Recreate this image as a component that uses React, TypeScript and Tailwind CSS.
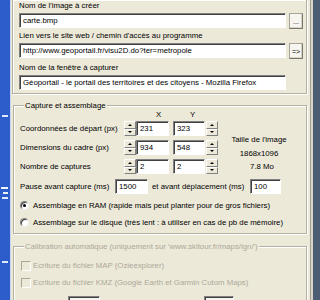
const face = "font-['Liberation_Sans',Arial,sans-serif]";

function Field({ value, className = "", disabled = false }: { value: string; className?: string; disabled?: boolean }) {
  return (
    <div
      className={`h-[15px] border border-[#808080] border-b-white border-r-white shadow-[inset_1px_1px_0_#404040] pl-[3px] leading-[13px] whitespace-nowrap overflow-hidden ${
        disabled ? "bg-[#f4f3ee] text-[#aca899]" : "bg-white text-black"
      } ${className}`}
    >
      {value}
    </div>
  );
}

function Btn({ label }: { label: string }) {
  return (
    <div className="ml-[3px] w-[14px] h-[16px] flex items-center justify-center border border-[#a6a49a] border-b-[#7a786e] border-r-[#7a786e] bg-[#f6f5f0] shadow-[inset_-1px_-1px_0_#d6d3c6] text-[7px] leading-none">
      {label}
    </div>
  );
}

function Spin() {
  return (
    <div className="w-[12px] h-[15px] flex flex-col">
      <div className="flex-1 flex items-center justify-center border border-white border-b-[#808080] border-r-[#808080] bg-[#ECE9D8]">
        <div className="w-0 h-0 border-l-[2px] border-r-[2px] border-b-[2px] border-l-transparent border-r-transparent border-b-black" />
      </div>
      <div className="flex-1 flex items-center justify-center border border-white border-b-[#808080] border-r-[#808080] bg-[#ECE9D8]">
        <div className="w-0 h-0 border-l-[2px] border-r-[2px] border-t-[2px] border-l-transparent border-r-transparent border-t-black" />
      </div>
    </div>
  );
}

function SpinRow({ label, x, y }: { label: string; x: string; y: string }) {
  return (
    <div className="flex items-center h-[15px] mb-[4px]">
      <div className="w-[104px] whitespace-nowrap">{label}</div>
      <Spin />
      <Field value={x} className="w-[33px]" />
      <Field value={y} className="w-[32px] ml-[4px]" />
      <div className="ml-[1px]">
        <Spin />
      </div>
    </div>
  );
}

function Radio({ checked, label }: { checked?: boolean; label: string }) {
  return (
    <div className="flex items-center h-[11px] mt-[6px]">
      <div className="w-[9px] h-[9px] rounded-full bg-white border border-[#808080] border-b-[#f0f0f0] border-r-[#f0f0f0] shadow-[inset_1px_1px_0_#404040] flex items-center justify-center">
        {checked && <div className="w-[3px] h-[3px] rounded-full bg-black" />}
      </div>
      <div className="ml-[4px] whitespace-nowrap">{label}</div>
    </div>
  );
}

function Check({ label, className = "" }: { label: string; className?: string }) {
  return (
    <div className={`flex items-center h-[11px] ${className}`}>
      <div className="ml-[1px] w-[10px] h-[10px] border border-[#aca899] border-b-white border-r-white bg-[#ECE9D8]" />
      <div className="ml-[2px] whitespace-nowrap text-[#aca899]">{label}</div>
    </div>
  );
}

const groupBox = "border border-[#b3b0a3] shadow-[inset_1px_1px_0_#fff,1px_1px_0_#fff]";

export default function App() {
  return (
    <div className={`w-[320px] h-[300px] overflow-hidden flex ${face} text-[7.8px] text-black`}>
      {/* desktop behind the window */}
      <div className="w-[10px] h-full bg-[#2c5dcb] flex flex-col">
        <div className="h-[115px]" />
        <div className="ml-[2px] w-[6px] h-[2px] bg-[#dfe8ff]" />
        <div className="h-[70px]" />
        <div className="ml-[1px] w-[7px] h-[2px] bg-[#eef3ff]" />
        <div className="mt-[3px] ml-[3px] w-[5px] h-[2px] bg-[#eef3ff]" />
        <div className="mt-[3px] ml-[2px] w-[6px] h-[2px] bg-[#dfe8ff]" />
        <div className="h-[62px]" />
        <div className="ml-[2px] w-[6px] h-[2px] bg-[#dfe8ff]" />
      </div>
      <div className="w-[1px] h-full bg-[#c9d6f2]" />

      {/* dialog */}
      <div className="w-[299px] h-full bg-[#ECE9D8] flex flex-col">
        <div className={`ml-[1px] w-[295px] border-t-0 ${groupBox} pl-[6px] pb-[3px]`}>
          <div className="h-[11px] leading-[11px]">Nom de l'image à créer</div>
          <div className="mt-[2px] flex items-start">
            <Field value="carte.bmp" className="w-[267px]" />
            <Btn label="..." />
          </div>
          <div className="mt-[1px] h-[11px] leading-[11px] whitespace-nowrap">
            Lien vers le site web / chemin d'accès au programme
          </div>
          <div className="mt-[2px] flex items-start">
            <Field value="http://www.geoportail.fr/visu2D.do?ter=metropole" className="w-[267px]" />
            <Btn label="=>" />
          </div>
          <div className="mt-[3px] h-[11px] leading-[11px]">Nom de la fenêtre à capturer</div>
          <div className="mt-[2px]">
            <Field
              value="Géoportail - le portail des territoires et des citoyens - Mozilla Firefox"
              className="w-[267px]"
            />
          </div>
        </div>

        <fieldset className={`mt-[6px] ml-[2px] w-[294px] ${groupBox} pl-[6px] pb-[5px]`}>
          <legend className="ml-[4px] px-[1px] h-[11px] leading-[11px] bg-[#ECE9D8]">Capture et assemblage</legend>
          <div className="h-[10px] leading-[7px] pl-[136px] flex">
            <span className="w-[34px]">X</span>
            <span>Y</span>
          </div>
          <div className="flex">
            <div className="flex flex-col">
              <SpinRow label="Coordonnées de départ (px)" x="231" y="323" />
              <SpinRow label="Dimensions du cadre (px)" x="934" y="548" />
              <SpinRow label="Nombre de captures" x="2" y="2" />
            </div>
            <div className="flex-1 pt-[12px] leading-[13.5px] flex flex-col items-center pr-[6px]">
              <div>Taille de l'image</div>
              <div>1868x1096</div>
              <div className="pl-[6px]">7.8 Mo</div>
            </div>
          </div>
          <div className="mt-[1px] flex items-center h-[15px]">
            <div className="w-[95px] whitespace-nowrap">Pause avant capture (ms)</div>
            <Field value="1500" className="w-[33px]" />
            <div className="ml-[4px] w-[98px] whitespace-nowrap">et avant déplacement (ms)</div>
            <Field value="100" className="w-[31px]" />
          </div>
          <Radio checked label="Assemblage en RAM (rapide mais peut planter pour de gros fichiers)" />
          <Radio label="Assemblage sur le disque (très lent : à utiliser en cas de pb de mémoire)" />
        </fieldset>

        <fieldset className={`mt-[7px] ml-[2px] w-[294px] ${groupBox} pl-[6px] pb-[6px]`}>
          <legend className="ml-[4px] px-[1px] h-[11px] leading-[11px] bg-[#ECE9D8] text-[#aca899] whitespace-nowrap">
            Calibration automatique (uniquement sur 'www.skitour.fr/maps/ign/')
          </legend>
          <Check className="mt-[8px]" label="Ecriture du fichier MAP (Ozieexplorer)" />
          <Check className="mt-[6px]" label="Ecriture du fichier KMZ (Google Earth et Garmin Cutom Maps)" />
          <div className="mt-[8px] flex items-center h-[15px] text-[#aca899]">
            <div className="w-[48px] whitespace-nowrap">Zoom Echelle</div>
            <Field value="50" className="w-[32px]" disabled />
            <div className="w-[104px] text-right pr-[3px] whitespace-nowrap">Qualité (0-100%)</div>
            <Field value="90" className="w-[30px]" disabled />
          </div>
        </fieldset>
      </div>

      {/* window frame on the right */}
      <div className="w-[1px] h-full bg-[#a5a396]" />
      <div className="w-[2px] h-full bg-[#d8d4c6]" />
      <div className="w-[7px] h-full bg-[#4b5e73]" />
    </div>
  );
}
